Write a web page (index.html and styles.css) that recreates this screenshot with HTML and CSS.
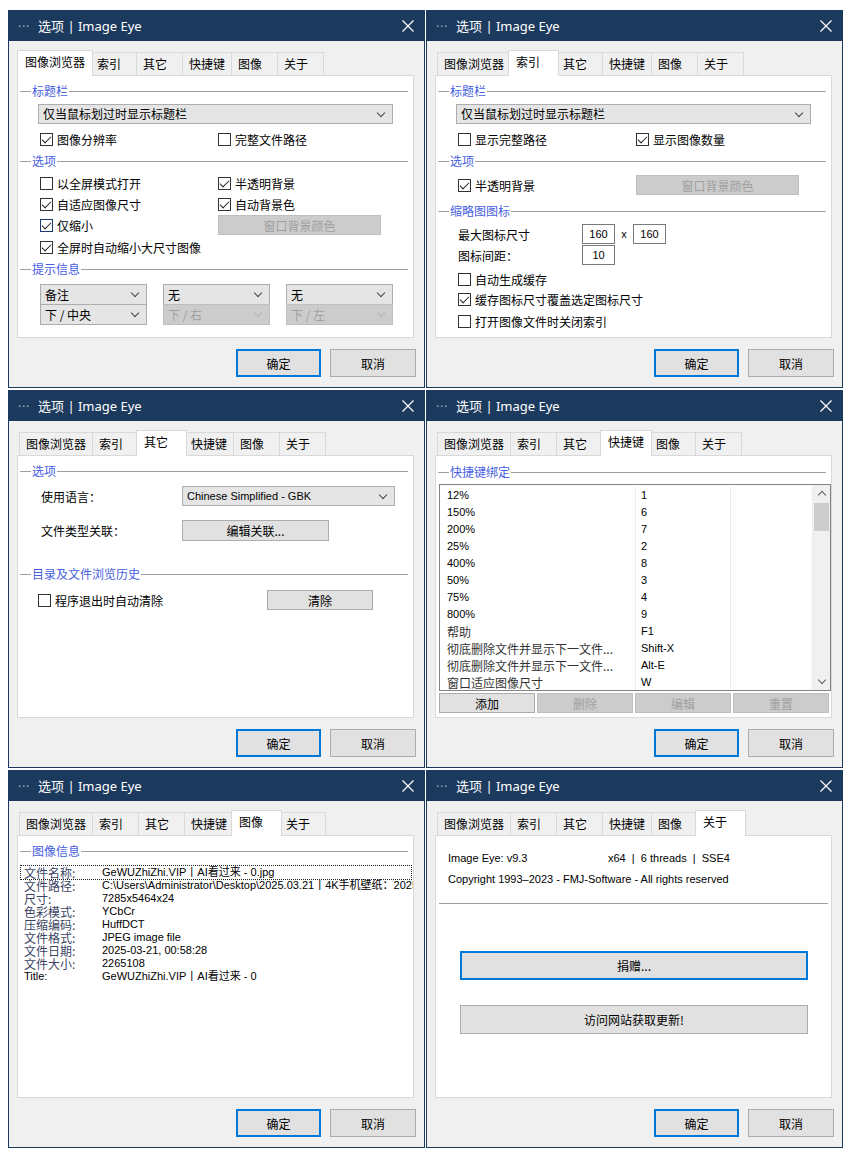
FILE: index.html
```html
<!DOCTYPE html>
<html lang="zh-CN">
<head>
    <meta charset="UTF-8">
    <title>选项 | Image Eye</title>
    <link rel="stylesheet" href="styles.css">
</head>
<body>
<div class="sheet">

    <!-- 图像浏览器 -->
    <div class="dlg">
        <div class="cap"><span class="dots">···</span><span class="cap-text">选项 | Image Eye</span><svg class="close" width="12" height="12" viewBox="0 0 12 12"><path d="M0.5 0.5L11.5 11.5M11.5 0.5L0.5 11.5" stroke="#fff" stroke-width="1.2"/></svg></div>
        <div class="body">
            <div class="tabs">
                <span class="tab on">图像浏览器</span><span class="tab">索引</span><span class="tab">其它</span><span class="tab">快捷键</span><span class="tab">图像</span><span class="tab">关于</span>
            </div>
            <div class="panel">
                <div class="grp">标题栏</div>
                <div class="sel zh top-sel">仅当鼠标划过时显示标题栏</div>
                <div class="row mt5"><span class="c1"><span class="box on"></span>图像分辨率</span><span class="c2"><span class="box"></span>完整文件路径</span></div>
                <div class="grp mt5">选项</div>
                <div class="row mt5"><span class="c1"><span class="box"></span>以全屏模式打开</span><span class="c2"><span class="box on"></span>半透明背景</span></div>
                <div class="row mt1"><span class="c1"><span class="box on"></span>自适应图像尺寸</span><span class="c2"><span class="box on"></span>自动背景色</span></div>
                <div class="row mt1"><span class="c1"><span class="box on focus"></span>仅缩小</span><span class="pb off bg-btn">窗口背景颜色</span></div>
                <div class="row mt2"><span class="c1 wide"><span class="box on"></span>全屏时自动缩小大尺寸图像</span></div>
                <div class="grp mt5">提示信息</div>
                <div class="hints">
                    <div><div class="sel zh">备注</div><div class="sel zh">下 / 中央</div></div>
                    <div><div class="sel zh">无</div><div class="sel zh off">下 / 右</div></div>
                    <div><div class="sel zh">无</div><div class="sel zh off">下 / 左</div></div>
                </div>
            </div>
            <div class="btns"><span class="btn def">确定</span><span class="btn">取消</span></div>
        </div>
    </div>

    <!-- 索引 -->
    <div class="dlg">
        <div class="cap"><span class="dots">···</span><span class="cap-text">选项 | Image Eye</span><svg class="close" width="12" height="12" viewBox="0 0 12 12"><path d="M0.5 0.5L11.5 11.5M11.5 0.5L0.5 11.5" stroke="#fff" stroke-width="1.2"/></svg></div>
        <div class="body">
            <div class="tabs">
                <span class="tab">图像浏览器</span><span class="tab on">索引</span><span class="tab">其它</span><span class="tab">快捷键</span><span class="tab">图像</span><span class="tab">关于</span>
            </div>
            <div class="panel">
                <div class="grp">标题栏</div>
                <div class="sel zh top-sel">仅当鼠标划过时显示标题栏</div>
                <div class="row mt5"><span class="c1"><span class="box"></span>显示完整路径</span><span class="c2"><span class="box on"></span>显示图像数量</span></div>
                <div class="grp mt5">选项</div>
                <div class="row tall mt6"><span class="c1"><span class="box on"></span>半透明背景</span><span class="pb off bg-btn">窗口背景颜色</span></div>
                <div class="grp mt8">缩略图图标</div>
                <div class="row mt6"><span class="lbl-size">最大图标尺寸</span><span class="num">160</span><span class="times">x</span><span class="num">160</span></div>
                <div class="row mt1"><span class="lbl-size">图标间距：</span><span class="num">10</span></div>
                <div class="row mt4"><span class="c1 wide"><span class="box"></span>自动生成缓存</span></div>
                <div class="row"><span class="c1 wide"><span class="box on"></span>缓存图标尺寸覆盖选定图标尺寸</span></div>
                <div class="row mt2"><span class="c1 wide"><span class="box"></span>打开图像文件时关闭索引</span></div>
            </div>
            <div class="btns"><span class="btn def">确定</span><span class="btn">取消</span></div>
        </div>
    </div>

    <!-- 其它 -->
    <div class="dlg">
        <div class="cap"><span class="dots">···</span><span class="cap-text">选项 | Image Eye</span><svg class="close" width="12" height="12" viewBox="0 0 12 12"><path d="M0.5 0.5L11.5 11.5M11.5 0.5L0.5 11.5" stroke="#fff" stroke-width="1.2"/></svg></div>
        <div class="body">
            <div class="tabs">
                <span class="tab">图像浏览器</span><span class="tab">索引</span><span class="tab on">其它</span><span class="tab">快捷键</span><span class="tab">图像</span><span class="tab">关于</span>
            </div>
            <div class="panel">
                <div class="grp">选项</div>
                <div class="row misc mt8"><span class="lbl-misc">使用语言：</span><span class="sel lang-sel">Chinese Simplified - GBK</span></div>
                <div class="row misc mt14"><span class="lbl-misc">文件类型关联：</span><span class="pb assoc-btn">编辑关联...</span></div>
                <div class="grp mt27">目录及文件浏览历史</div>
                <div class="row hist mt9"><span class="c1 hist-c"><span class="box"></span>程序退出时自动清除</span><span class="pb clear-btn">清除</span></div>
            </div>
            <div class="btns"><span class="btn def">确定</span><span class="btn">取消</span></div>
        </div>
    </div>

    <!-- 快捷键 -->
    <div class="dlg">
        <div class="cap"><span class="dots">···</span><span class="cap-text">选项 | Image Eye</span><svg class="close" width="12" height="12" viewBox="0 0 12 12"><path d="M0.5 0.5L11.5 11.5M11.5 0.5L0.5 11.5" stroke="#fff" stroke-width="1.2"/></svg></div>
        <div class="body">
            <div class="tabs">
                <span class="tab">图像浏览器</span><span class="tab">索引</span><span class="tab">其它</span><span class="tab on">快捷键</span><span class="tab">图像</span><span class="tab">关于</span>
            </div>
            <div class="panel">
                <div class="grp mt9">快捷键绑定</div>
                <div class="list">
                    <div class="list-rows">
                        <div class="lr"><span>12%</span><span>1</span><span></span></div>
                        <div class="lr"><span>150%</span><span>6</span><span></span></div>
                        <div class="lr"><span>200%</span><span>7</span><span></span></div>
                        <div class="lr"><span>25%</span><span>2</span><span></span></div>
                        <div class="lr"><span>400%</span><span>8</span><span></span></div>
                        <div class="lr"><span>50%</span><span>3</span><span></span></div>
                        <div class="lr"><span>75%</span><span>4</span><span></span></div>
                        <div class="lr"><span>800%</span><span>9</span><span></span></div>
                        <div class="lr"><span class="zh">帮助</span><span>F1</span><span></span></div>
                        <div class="lr"><span class="zh">彻底删除文件并显示下一文件...</span><span>Shift-X</span><span></span></div>
                        <div class="lr"><span class="zh">彻底删除文件并显示下一文件...</span><span>Alt-E</span><span></span></div>
                        <div class="lr"><span class="zh">窗口适应图像尺寸</span><span>W</span><span></span></div>
                    </div>
                    <div class="sb">
                        <span class="sb-btn up"></span>
                        <span class="sb-thumb"></span>
                        <span class="sb-fill"></span>
                        <span class="sb-btn dn"></span>
                    </div>
                </div>
                <div class="key-btns">
                    <span class="pb">添加</span><span class="pb off">删除</span><span class="pb off">编辑</span><span class="pb off">重置</span>
                </div>
            </div>
            <div class="btns"><span class="btn def">确定</span><span class="btn">取消</span></div>
        </div>
    </div>

    <!-- 图像 -->
    <div class="dlg">
        <div class="cap"><span class="dots">···</span><span class="cap-text">选项 | Image Eye</span><svg class="close" width="12" height="12" viewBox="0 0 12 12"><path d="M0.5 0.5L11.5 11.5M11.5 0.5L0.5 11.5" stroke="#fff" stroke-width="1.2"/></svg></div>
        <div class="body">
            <div class="tabs">
                <span class="tab">图像浏览器</span><span class="tab">索引</span><span class="tab">其它</span><span class="tab">快捷键</span><span class="tab on">图像</span><span class="tab">关于</span>
            </div>
            <div class="panel">
                <div class="grp">图像信息</div>
                <div class="info">
                    <div class="ir focus"><span class="k">文件名称:</span><span>GeWUZhiZhi.VIP丨AI看过来 - 0.jpg</span></div>
                    <div class="ir"><span class="k">文件路径:</span><span>C:\Users\Administrator\Desktop\2025.03.21丨4K手机壁纸：2025.03.21</span></div>
                    <div class="ir"><span class="k">尺寸:</span><span>7285x5464x24</span></div>
                    <div class="ir"><span class="k">色彩模式:</span><span>YCbCr</span></div>
                    <div class="ir"><span class="k">压缩编码:</span><span>HuffDCT</span></div>
                    <div class="ir"><span class="k">文件格式:</span><span>JPEG image file</span></div>
                    <div class="ir"><span class="k">文件日期:</span><span>2025-03-21, 00:58:28</span></div>
                    <div class="ir"><span class="k">文件大小:</span><span>2265108</span></div>
                    <div class="ir"><span class="k en">Title:</span><span>GeWUZhiZhi.VIP丨AI看过来 - 0</span></div>
                </div>
            </div>
            <div class="btns"><span class="btn def">确定</span><span class="btn">取消</span></div>
        </div>
    </div>

    <!-- 关于 -->
    <div class="dlg">
        <div class="cap"><span class="dots">···</span><span class="cap-text">选项 | Image Eye</span><svg class="close" width="12" height="12" viewBox="0 0 12 12"><path d="M0.5 0.5L11.5 11.5M11.5 0.5L0.5 11.5" stroke="#fff" stroke-width="1.2"/></svg></div>
        <div class="body">
            <div class="tabs">
                <span class="tab">图像浏览器</span><span class="tab">索引</span><span class="tab">其它</span><span class="tab">快捷键</span><span class="tab">图像</span><span class="tab on">关于</span>
            </div>
            <div class="panel">
                <div class="about-line first"><span class="ver">Image Eye: v9.3</span><span>x64&nbsp; |&nbsp; 6 threads&nbsp; |&nbsp; SSE4</span></div>
                <div class="about-line">Copyright 1993–2023 - FMJ-Software - All rights reserved</div>
                <div class="about-rule"></div>
                <div class="pb big def donate">捐赠...</div>
                <div class="pb big visit">访问网站获取更新!</div>
            </div>
            <div class="btns"><span class="btn def">确定</span><span class="btn">取消</span></div>
        </div>
    </div>

</div>
</body>
</html>
```

FILE: styles.css
```css
* {
    box-sizing: border-box;
}

body {
    margin: 0;
    background: #fff;
    color: #000;
    font: 11px "Liberation Sans", "Noto Sans CJK SC", sans-serif;
}

.zh {
    font-family: "Noto Sans CJK SC", sans-serif;
    font-size: 12px;
}

.sheet {
    display: grid;
    grid-template-columns: 417px 417px;
    grid-auto-rows: 378px;
    column-gap: 1px;
    row-gap: 2px;
    padding: 10px 0 0 8px;
}

.dlg {
    display: flex;
    flex-direction: column;
    border: 1px solid #1c3a5e;
    background: #f0f0f0;
    overflow: hidden;
}

/* caption bar */
.cap {
    display: flex;
    align-items: center;
    height: 30px;
    padding: 0 10px 1px 9px;
    background: #1c3a5e;
    color: #fff;
    font: 13px "Noto Sans", "Noto Sans CJK SC", sans-serif;
}

.dots {
    width: 20px;
    color: #97a3b6;
    font-size: 13px;
    letter-spacing: 0.5px;
}

.cap-text {
    flex: 1;
}

.close {
    display: block;
}

.body {
    flex: 1;
    display: flex;
    flex-direction: column;
    padding: 9px 10px 0 8px;
}

/* tabs */
.tabs {
    display: flex;
    align-items: flex-end;
    height: 25px;
    padding-left: 2px;
}

.tab {
    height: 23px;
    min-width: 47px;
    padding: 3px 6px 0;
    margin-right: -1px;
    border: 1px solid #d9d9d9;
    border-bottom: 0;
    background: #f0f0f0;
    font-family: "Noto Sans CJK SC", sans-serif;
    font-size: 12px;
    line-height: 16px;
}

    .tab.on {
        position: relative;
        z-index: 1;
        height: 26px;
        min-width: 51px;
        margin: 0 -3px -1px -2px;
        padding: 3px 7px 0;
        background: #fff;
    }

.panel {
    height: 263px;
    border: 1px solid #d9d9d9;
    background: #fff;
    overflow: hidden;
}

.btns {
    display: flex;
    justify-content: flex-end;
    gap: 9px;
    margin: 11px -2px 0 0;
}

.btn {
    display: flex;
    align-items: center;
    justify-content: center;
    width: 86px;
    height: 28px;
    border: 1px solid #adadad;
    background: #e1e1e1;
    font-family: "Noto Sans CJK SC", sans-serif;
    font-size: 12px;
}

    .btn.def {
        width: 85px;
        border: 2px solid #0078d7;
    }

/* group heading with rule */
.grp {
    display: flex;
    align-items: center;
    gap: 1px;
    height: 14px;
    margin: 8px 5px 0 2px;
    color: #4760e0;
    font-family: "Noto Sans CJK SC", sans-serif;
    font-size: 12px;
    line-height: 14px;
}

    .grp::before {
        content: "";
        width: 11px;
        height: 1px;
        background: #a0a0a0;
    }

    .grp::after {
        content: "";
        flex: 1;
        height: 1px;
        background: #a0a0a0;
    }

.mt1 { margin-top: 1px; }
.mt2 { margin-top: 2px; }
.mt4 { margin-top: 4px; }
.mt5 { margin-top: 5px; }
.mt6 { margin-top: 6px; }
.mt8 { margin-top: 8px; }
.mt9 { margin-top: 9px; }
.mt14 { margin-top: 14px; }
.mt27 { margin-top: 27px; }

/* combo boxes */
.sel {
    position: relative;
    display: block;
    height: 21px;
    padding-left: 4px;
    border: 1px solid #adadad;
    background: #e5e5e5;
    line-height: 19px;
}

    .sel::after {
        content: "";
        position: absolute;
        right: 8px;
        top: 5px;
        width: 5px;
        height: 5px;
        border-right: 1px solid #444;
        border-bottom: 1px solid #444;
        transform: rotate(45deg);
    }

    .sel.off {
        border-color: #bfbfbf;
        background: #cccccc;
        color: #a0a0a0;
    }

        .sel.off::after {
            border-color: #b4b4b4;
        }

.top-sel {
    width: 355px;
    height: 20px;
    margin: 6px 0 0 20px;
    line-height: 18px;
}

/* check rows */
.row {
    display: flex;
    align-items: center;
    height: 20px;
    padding-left: 22px;
    font-family: "Noto Sans CJK SC", sans-serif;
    font-size: 12px;
}

    .row.tall {
        height: 22px;
    }

.c1 {
    display: flex;
    align-items: center;
    width: 178px;
}

    .c1.wide {
        width: auto;
    }

.c2 {
    display: flex;
    align-items: center;
}

.box {
    position: relative;
    flex: none;
    width: 13px;
    height: 13px;
    margin-right: 4px;
    border: 1px solid #333;
    background: #fff;
}

    .box.focus {
        border-color: #1c3a6e;
    }

    .box.on::after {
        content: "";
        position: absolute;
        left: 3px;
        top: 0;
        width: 4px;
        height: 8px;
        border: solid #222;
        border-width: 0 1.3px 1.3px 0;
        transform: rotate(45deg);
    }

/* push buttons */
.pb {
    display: flex;
    align-items: center;
    justify-content: center;
    height: 20px;
    border: 1px solid #adadad;
    background: #e1e1e1;
    font-family: "Noto Sans CJK SC", sans-serif;
    font-size: 12px;
}

    .pb.off {
        border-color: #bfbfbf;
        background: #cccccc;
        color: #a0a0a0;
    }

    .pb.def {
        border: 2px solid #0078d7;
    }

.bg-btn {
    width: 163px;
}

.hints {
    display: grid;
    grid-template-columns: repeat(3, 107px);
    column-gap: 16px;
    margin: 8px 0 0 22px;
}

    .hints .sel + .sel {
        margin-top: -1px;
    }

/* index tab */
.lbl-size {
    width: 124px;
}

.num {
    width: 33px;
    height: 20px;
    border: 1px solid #7a7a7a;
    font-family: "Liberation Sans", sans-serif;
    font-size: 11px;
    line-height: 18px;
    text-align: center;
}

.times {
    width: 18px;
    text-align: center;
    font-family: "Liberation Sans", sans-serif;
    font-size: 11px;
}

/* misc tab */
.row.misc {
    padding-left: 23px;
}

.lbl-misc {
    width: 141px;
}

.lang-sel {
    width: 213px;
    height: 20px;
    line-height: 18px;
    font-family: "Liberation Sans", sans-serif;
    font-size: 11px;
}

.assoc-btn {
    width: 147px;
    height: 21px;
}

.row.hist {
    padding-left: 20px;
}

.hist-c {
    width: 229px;
}

.clear-btn {
    width: 106px;
}

/* hotkey list */
.list {
    display: flex;
    width: 392px;
    height: 207px;
    margin: 5px 0 0 3px;
    border: 1px solid #828282;
}

.list-rows {
    flex: 1;
    padding-top: 2px;
    overflow: hidden;
}

.lr {
    display: grid;
    grid-template-columns: 196px 95px 1fr;
    height: 17px;
    line-height: 17px;
    white-space: nowrap;
}

    .lr span {
        padding-left: 7px;
        border-right: 1px solid #ececec;
    }

        .lr span + span {
            padding-left: 5px;
        }

    .lr .zh {
        color: #333;
    }

.sb {
    display: flex;
    flex-direction: column;
    width: 17px;
    background: #f0f0f0;
}

.sb-btn {
    position: relative;
    height: 17px;
}

    .sb-btn::after {
        content: "";
        position: absolute;
        left: 6px;
        width: 5px;
        height: 5px;
        border: solid #606060;
        transform: rotate(45deg);
    }

    .sb-btn.up::after {
        top: 7px;
        border-width: 1px 0 0 1px;
    }

    .sb-btn.dn::after {
        top: 4px;
        border-width: 0 1px 1px 0;
    }

.sb-thumb {
    height: 28px;
    margin: 1px 1px 0;
    background: #cdcdcd;
}

.sb-fill {
    flex: 1;
}

.key-btns {
    display: flex;
    gap: 2px;
    margin: 2px 0 0 3px;
}

    .key-btns .pb {
        width: 96px;
    }

/* image info */
.info {
    width: 390px;
    margin: 8px 0 0 3px;
}

.ir {
    display: flex;
    height: 13px;
    padding-left: 3px;
    line-height: 13px;
    white-space: nowrap;
}

    .ir.focus {
        outline: 1px dotted #222;
    }

    .ir .k {
        flex: none;
        width: 78px;
        color: #3a4363;
        font-family: "Noto Sans CJK SC", sans-serif;
        font-size: 12px;
    }

        .ir .k.en {
            color: #000;
            font-family: "Liberation Sans", sans-serif;
            font-size: 11px;
        }

/* about */
.about-line {
    height: 16px;
    margin-top: 5px;
    padding-left: 12px;
    line-height: 16px;
}

    .about-line.first {
        margin-top: 14px;
    }

.ver {
    display: inline-block;
    width: 160px;
}

.about-rule {
    width: 389px;
    margin: 16px 0 0 3px;
    border-top: 1px solid #a0a0a0;
}

.pb.big {
    width: 348px;
    height: 29px;
    margin-left: 24px;
}

.donate {
    margin-top: 47px;
}

.visit {
    margin-top: 25px;
}
```
